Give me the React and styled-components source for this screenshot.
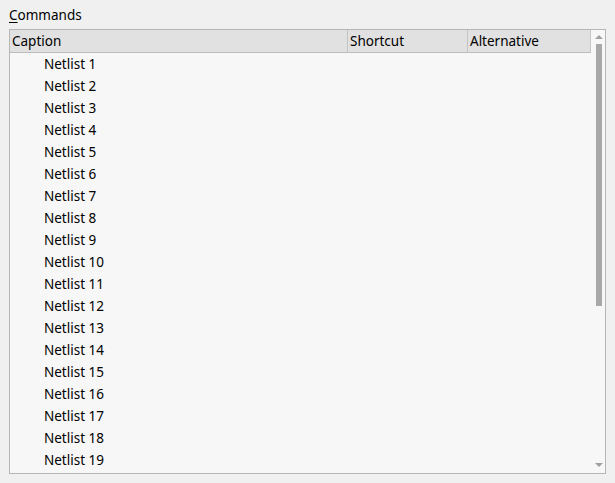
import React from 'react';
import styled, { createGlobalStyle } from 'styled-components';

const GlobalStyle = createGlobalStyle`
  html, body {
    margin: 0;
    padding: 0;
    background: #f0f0f0;
    font-family: "Segoe UI", "Noto Sans", "Open Sans", sans-serif;
  }
`;

const Page = styled.div`
  width: 615px;
  height: 483px;
  padding: 6px 9px 0 9px;
  box-sizing: border-box;
  background: #f0f0f0;
`;

const Label = styled.div`
  font-size: 13.5px;
  color: #000;
  height: 23px;
  line-height: 19px;
  u { text-decoration: underline; text-underline-offset: 2px; }
`;

const ListBox = styled.div`
  width: 597px;
  height: 445px;
  box-sizing: border-box;
  border: 1px solid #b6b6b6;
  background: #f7f7f7;
  display: grid;
  grid-template-columns: 1fr 14px;
  overflow: hidden;
`;

const ListArea = styled.div`
  display: flex;
  flex-direction: column;
  min-width: 0;
`;

const Header = styled.div`
  display: grid;
  grid-template-columns: 337px 120px 1fr;
  height: 23px;
  background: #e1e1e1;
  border-bottom: 1px solid #bcbcbc;
  border-right: 1px solid #c6c6c6;
  box-sizing: border-box;
`;

const HeaderCell = styled.div`
  font-size: 13.5px;
  line-height: 23px;
  padding-left: 2px;
  border-left: ${p => (p.$first ? 'none' : '1px solid #c4c4c4')};
  color: #000;
  white-space: nowrap;
`;

const Row = styled.div`
  height: 22px;
  line-height: 23px;
  font-size: 13.5px;
  padding-left: 34px;
  color: #000;
  white-space: nowrap;
`;

const ScrollBar = styled.div`
  display: flex;
  flex-direction: column;
  align-items: center;
  padding: 3px 0 4px 2px;
  box-sizing: border-box;
`;

const Arrow = styled.div`
  width: 0;
  height: 0;
  border-left: 4px solid transparent;
  border-right: 4px solid transparent;
  ${p => (p.$down
    ? 'border-top: 4px solid #a0a0a0;'
    : 'border-bottom: 4px solid #a0a0a0;')}
  margin: 2px 0;
`;

const Track = styled.div`
  flex: 1;
  width: 6px;
  margin: 3px 0 4px;
  display: flex;
  flex-direction: column;
`;

const Thumb = styled.div`
  width: 6px;
  height: 262px;
  background: #a8a8a8;
`;

const items = Array.from({ length: 19 }, (_, i) => `Netlist ${i + 1}`);

export default function App() {
  return (
    <>
      <GlobalStyle />
      <Page>
        <Label><u>C</u>ommands</Label>
        <ListBox>
          <ListArea>
            <Header>
              <HeaderCell $first>Caption</HeaderCell>
              <HeaderCell>Shortcut</HeaderCell>
              <HeaderCell>Alternative</HeaderCell>
            </Header>
            {items.map(name => (
              <Row key={name}>{name}</Row>
            ))}
          </ListArea>
          <ScrollBar>
            <Arrow />
            <Track>
              <Thumb />
            </Track>
            <Arrow $down />
          </ScrollBar>
        </ListBox>
      </Page>
    </>
  );
}
